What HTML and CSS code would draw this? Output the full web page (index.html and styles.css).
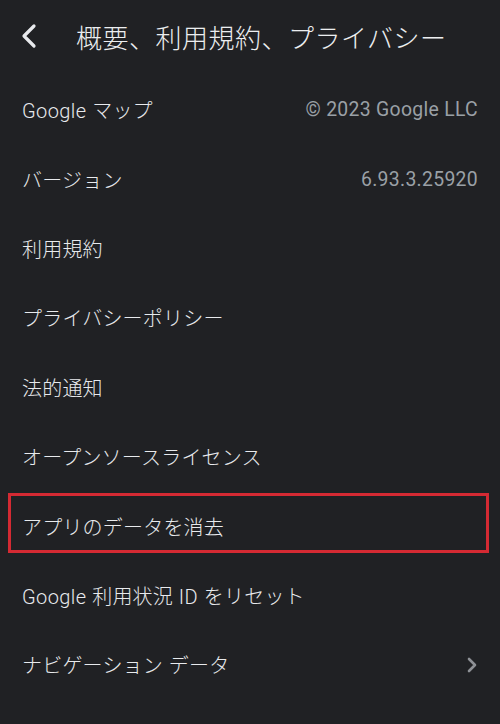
FILE: index.html
```html
<!DOCTYPE html>
<html lang="ja">
<head>
<meta charset="utf-8">
<link rel="stylesheet" href="styles.css">
</head>
<body>
<div class="page">
  <header class="header">
    <svg class="back" width="18" height="26" viewBox="0 0 18 26"><path d="M14 3 L4 13 L14 23" fill="none" stroke="#e8eaed" stroke-width="3.2" stroke-linecap="round" stroke-linejoin="round"/></svg>
    <h1 class="title">概要、利用規約、プライバシー</h1>
  </header>
  <ul class="list">
    <li class="row"><span class="label"><span class="en">Google</span> マップ</span><span class="value en">© 2023 Google LLC</span></li>
    <li class="row"><span class="label">バージョン</span><span class="value en">6.93.3.25920</span></li>
    <li class="row"><span class="label">利用規約</span></li>
    <li class="row"><span class="label">プライバシーポリシー</span></li>
    <li class="row"><span class="label">法的通知</span></li>
    <li class="row"><span class="label">オープンソースライセンス</span></li>
    <li class="row row-highlight"><span class="label">アプリのデータを消去</span></li>
    <li class="row"><span class="label"><span class="en">Google</span> 利用状況 <span class="en">ID</span> をリセット</span></li>
    <li class="row"><span class="label">ナビゲーション データ</span>
      <svg class="chev" width="12" height="18" viewBox="0 0 12 18"><path d="M3 3 L9 9 L3 15" fill="none" stroke="#8e9196" stroke-width="2.6" stroke-linecap="round" stroke-linejoin="round"/></svg>
    </li>
  </ul>
</div>
</body>
</html>
```
FILE: styles.css
```css
* { box-sizing: border-box; }
html, body { margin: 0; padding: 0; background: #202124; }
body {
  font-family: "Liberation Sans", "Noto Sans CJK JP", sans-serif;
  color: #e8eaed;
  width: 500px;
  height: 724px;
  overflow: hidden;
}
.header {
  height: 75px;
  display: flex;
  align-items: center;
  padding: 0 0 3px 20px;
}
.back { flex: none; }
.title {
  margin: 0 0 0 38px;
  font-size: 26px;
  font-weight: 300;
  letter-spacing: 0.5px;
  color: #eceef0;
}
.list { list-style: none; margin: 0; padding: 0; }
.row {
  position: relative;
  height: 69.4px;
  display: flex;
  align-items: center;
  justify-content: space-between;
  padding: 0 22px 0 22px;
  font-size: 20px;
  font-weight: 300;
}
.label { color: #e8eaed; letter-spacing: 0.2px; }
.en { font-family: "Roboto", "Liberation Sans", sans-serif; font-weight: 400; letter-spacing: 0.2px; }
.label .en { font-weight: 300; letter-spacing: 0.4px; }
.value { color: #9aa0a6; font-size: 19.4px; letter-spacing: 0.3px; }
.chev { margin-right: 0; }
.row-highlight::after {
  content: "";
  position: absolute;
  left: 8px;
  right: 11px;
  top: 2px;
  bottom: 8px;
  border: 3px solid #d42a33;
}
```
